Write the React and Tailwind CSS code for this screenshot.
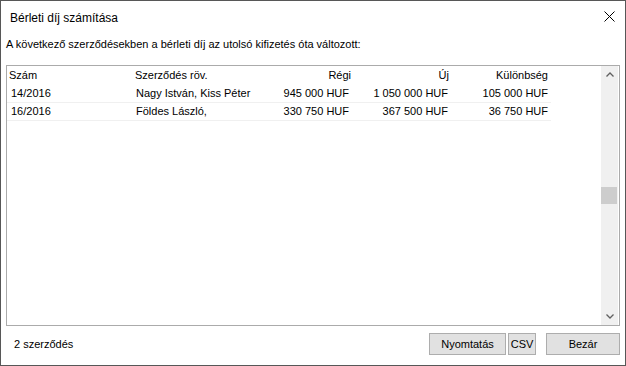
import React from "react";

const rows = [
  ["14/2016", "Nagy István, Kiss Péter", "945 000 HUF", "1 050 000 HUF", "105 000 HUF"],
  ["16/2016", "Földes László,", "330 750 HUF", "367 500 HUF", "36 750 HUF"],
];

const grid = "grid grid-cols-[126px_130px_91px_98px_99px]";

export default function App() {
  return (
    <div
      className="w-[626px] h-[366px] bg-white border border-[#575757] flex flex-col text-black text-[11px] leading-[13px]"
      style={{ fontFamily: '"Liberation Sans", Arial, sans-serif' }}
    >
      {/* title bar */}
      <div className="h-[30px] flex items-center justify-between pl-[9px] pr-[10px] shrink-0">
        <span className="text-[12px] leading-[15px] mt-[4px]">Bérleti díj számítása</span>
        <svg width="11" height="11" viewBox="0 0 11 11" className="mt-[1px]">
          <path d="M0.5 0.5 L10.5 10.5 M10.5 0.5 L0.5 10.5" stroke="#000" strokeWidth="1" fill="none" />
        </svg>
      </div>
      <div className="pl-[5px] h-[34px] pt-[7px] shrink-0">
        A következő szerződésekben a bérleti díj az utolsó kifizetés óta változott:
      </div>
      {/* list box */}
      <div className="ml-[5px] w-[614px] h-[261px] border border-[#ababab] flex shrink-0">
        <div className="flex-1 flex flex-col">
          <div className={`${grid} h-[19px] items-center`}>
            <div className="pl-[2px]">Szám</div>
            <div className="pl-[2px]">Szerződés röv.</div>
            <div className="text-right pr-[3px]">Régi</div>
            <div className="text-right pr-[3px]">Új</div>
            <div className="text-right pr-[3px]">Különbség</div>
          </div>
          {rows.map((r) => (
            <div key={r[0]} className={`${grid} w-[544px] h-[18px] items-center border-b border-[#f0f0f0]`}>
              <div className="pl-[4px]">{r[0]}</div>
              <div className="pl-[3px]">{r[1]}</div>
              <div className="text-right pr-[5px]">{r[2]}</div>
              <div className="text-right pr-[4px]">{r[3]}</div>
              <div className="text-right pr-[3px]">{r[4]}</div>
            </div>
          ))}
        </div>
        {/* scrollbar */}
        <div className="w-[17px] mr-[1px] bg-[#f0f0f0] flex flex-col">
          <div className="h-[17px] flex items-center justify-center">
            <svg width="8" height="5" viewBox="0 0 8 5">
              <path d="M0.5 4.5 L4 1 L7.5 4.5" stroke="#606060" strokeWidth="1.3" fill="none" />
            </svg>
          </div>
          <div className="flex-1">
            <div className="mt-[104px] w-[16px] h-[17px] bg-[#cdcdcd]" />
          </div>
          <div className="h-[17px] flex items-center justify-center">
            <svg width="8" height="5" viewBox="0 0 8 5">
              <path d="M0.5 0.5 L4 4 L7.5 0.5" stroke="#606060" strokeWidth="1.3" fill="none" />
            </svg>
          </div>
        </div>
      </div>
      {/* footer */}
      <div className="flex items-center mt-[7px] h-[22px] shrink-0">
        <div className="pl-[13px] flex-1">2 szerződés</div>
        <button className="w-[77px] h-[22px] bg-[#e1e1e1] border border-[#adadad]">Nyomtatás</button>
        <button className="ml-[2px] w-[28px] h-[22px] bg-[#e1e1e1] border border-[#adadad]">CSV</button>
        <button className="ml-[10px] mr-[5px] w-[74px] h-[22px] bg-[#e1e1e1] border border-[#adadad]">Bezár</button>
      </div>
    </div>
  );
}
